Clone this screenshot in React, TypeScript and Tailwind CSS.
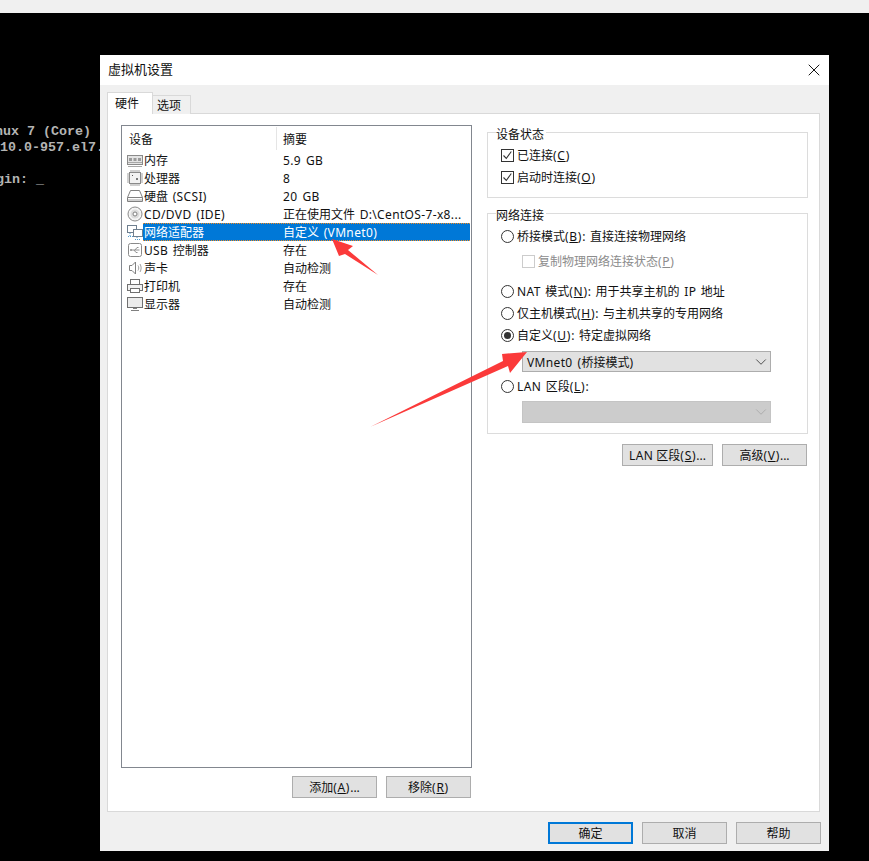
import type { ReactNode } from "react";
import { X, ChevronDown } from "lucide-react";

const MemoryIcon = () => (
  <svg width="16" height="16" viewBox="0 0 16 16" fill="none">
    <rect x="0.5" y="3.5" width="15" height="9" fill="#e4e4e4" stroke="#8a8a8a" />
    <rect x="2" y="6" width="3" height="3" fill="#9a9a9a" />
    <rect x="6.5" y="6" width="3" height="3" fill="#9a9a9a" />
    <rect x="11" y="6" width="3" height="3" fill="#9a9a9a" />
    <path d="M1 10.5h14M1 14.500h14" stroke="#a8a8a8" />
  </svg>
);

const CpuIcon = () => (
  <svg width="16" height="16" viewBox="0 0 16 16" fill="none">
    <rect x="2.5" y="2.5" width="11" height="11" fill="#f2f2f2" stroke="#8a8a8a" />
    <path
      d="M4 0v2M6 0v2M8 0v2M10 0v2M12 0v2M4 14v2M6 14v2M8 14v2M10 14v2M12 14v2M0 4h2M0 6h2M0 8h2M0 10h2M0 12h2M14 4h2M14 6h2M14 8h2M14 10h2M14 12h2"
      stroke="#a0a0a0"
    />
    <rect x="5" y="5" width="1" height="1" fill="#555" />
    <rect x="9" y="8" width="2" height="2" fill="#777" />
  </svg>
);

const DiskIcon = () => (
  <svg width="16" height="16" viewBox="0 0 16 16" fill="none">
    <path d="M3.5 2.5h9l3 7v4h-15v-4z" fill="#fff" stroke="#808080" />
    <path d="M0.5 9.5h15" stroke="#808080" />
    <path d="M1 11.5h14M1 12.5h14" stroke="#d0d0d0" />
  </svg>
);

const CdIcon = () => (
  <svg width="16" height="16" viewBox="0 0 16 16" fill="none">
    <circle cx="8" cy="8" r="7" fill="#f4f4f4" stroke="#8a8a8a" />
    <circle cx="8" cy="8" r="4.5" fill="#dcdcdc" />
    <circle cx="8" cy="8" r="2" fill="#fff" stroke="#808080" />
  </svg>
);

const NetworkIcon = () => (
  <svg width="16" height="16" viewBox="0 0 16 16" fill="none">
    <rect x="0.5" y="1.5" width="9" height="7" fill="#fff" stroke="#6f7f8f" />
    <rect x="6.5" y="5.5" width="9" height="7" fill="#fff" stroke="#6f7f8f" />
    <path d="M3 9v3M1 12.5h5M10 13v2M8 15.5h5" stroke="#4f9bd0" strokeDasharray="1 1" />
  </svg>
);

const UsbIcon = () => (
  <svg width="16" height="16" viewBox="0 0 16 16" fill="none">
    <rect x="1.5" y="1.5" width="13" height="13" rx="2" fill="#fff" stroke="#8a8a8a" />
    <path d="M3.5 8h9M8 8l2-2.5h1.5M7 8l2 2.5h1.5" stroke="#909090" />
    <circle cx="4" cy="8" r="1" fill="#909090" />
  </svg>
);

const SpeakerIcon = () => (
  <svg width="16" height="16" viewBox="0 0 16 16" fill="none">
    <path d="M2.5 5.5h2.5l3.5-3.5v12l-3.5-3.5h-2.5z" fill="#fff" stroke="#808080" />
    <path d="M11 5.5c1 1.500 1 3.500 0 5M13 4c1.500 2.500 1.500 5.500 0 8" stroke="#a0a0a0" />
  </svg>
);

const PrinterIcon = () => (
  <svg width="16" height="16" viewBox="0 0 16 16" fill="none">
    <rect x="3.5" y="1.500" width="9" height="5" fill="#fff" stroke="#707070" />
    <rect x="0.5" y="6.500" width="15" height="6" fill="#f2f2f2" stroke="#707070" />
    <rect x="3.500" y="10.500" width="9" height="4" fill="#fff" stroke="#707070" />
  </svg>
);

const MonitorIcon = () => (
  <svg width="16" height="16" viewBox="0 0 16 16" fill="none">
    <rect x="0.500" y="1.500" width="15" height="10" fill="#ececec" stroke="#707070" />
    <path d="M6 12.500h4M4 14.500h8" stroke="#808080" />
  </svg>
);

// latin runs are a touch wider in the picture than Noto Sans sets them
const L = ({ children }: { children: ReactNode }) => <span className="tracking-[0.35px]">{children}</span>;

// mnemonic like (C), parens sit wider than the default advance
const Mn = ({ k }: { k: string }) => (
  <span className="tracking-[0.7px]">
    (<u>{k}</u>)
  </span>
);

const devices = [
  { icon: <MemoryIcon />, name: "内存", summary: <L>5.9 GB</L> },
  { icon: <CpuIcon />, name: "处理器", summary: "8" },
  { icon: <DiskIcon />, name: <>硬盘 <L>(SCSI)</L></>, summary: <L>20 GB</L> },
  { icon: <CdIcon />, name: <L>CD/DVD (IDE)</L>, summary: <>正在使用文件 <L>D:\CentOS-7-x8...</L></> },
  { icon: <NetworkIcon />, name: "网络适配器", summary: <>自定义 <L>(VMnet0)</L></>, selected: true },
  { icon: <UsbIcon />, name: <><L>USB</L> 控制器</>, summary: "存在" },
  { icon: <SpeakerIcon />, name: "声卡", summary: "自动检测" },
  { icon: <PrinterIcon />, name: "打印机", summary: "存在" },
  { icon: <MonitorIcon />, name: "显示器", summary: "自动检测" },
];

const Btn = ({ children, primary, className }: { children: ReactNode; primary?: boolean; className?: string }) => (
  <button
    className={`h-[22px] flex items-center justify-center bg-[#e1e1e1] ${
      primary ? "border-2 border-[#0078d7]" : "border border-[#adadad]"
    } ${className ?? "w-[85px]"}`}
  >
    <span className="pt-[2px]">{children}</span>
  </button>
);

const Check = ({ label, disabled }: { label: ReactNode; disabled?: boolean }) => (
  <div className={`h-[18px] flex items-center gap-[3px] ${disabled ? "text-[#8c8c8c]" : ""}`}>
    <span
      className={`w-[13px] h-[13px] border flex items-center justify-center bg-white ${
        disabled ? "border-[#cccccc]" : "border-[#333333]"
      }`}
    >
      {!disabled && (
        <svg width="11" height="11" viewBox="0 0 11 11" fill="none">
          <path d="M1.500 5.500l2.800 3 5-7" stroke="#333" strokeWidth="1.100" />
        </svg>
      )}
    </span>
    <span className="pt-[2px]">{label}</span>
  </div>
);

const Radio = ({ label, checked }: { label: ReactNode; checked?: boolean }) => (
  <div className="h-[18px] flex items-center gap-[3px]">
    <span className="w-[13px] h-[13px] rounded-full border border-[#333333] bg-white flex items-center justify-center">
      {checked && <span className="w-[7px] h-[7px] rounded-full bg-[#333333]" />}
    </span>
    <span className="pt-[2px]">{label}</span>
  </div>
);

const Group = ({ title, className, children }: { title: string; className: string; children: ReactNode }) => (
  <div className={`relative border border-[#dcdcdc] ${className}`}>
    <span className="absolute -top-[7px] left-[8px] bg-white pr-[2px] leading-[18px]">{title}</span>
    {children}
  </div>
);

export default function App() {
  return (
    <div
      className="relative w-[869px] h-[861px] bg-black overflow-hidden text-[12px] leading-[18px] text-[#111111] [word-spacing:1.5px]"
      style={{ fontFamily: '"Noto Sans", "Noto Sans CJK SC", sans-serif' }}
    >
      <div className="h-[13px] bg-[#f0f0f0]" />

      {/* console behind the dialog */}
      <div className="absolute left-0 top-[124px] whitespace-pre font-['Liberation_Mono',monospace] font-bold text-[13.33px] leading-[16px] text-[#b4b4b4] [word-spacing:0px]">
        <div className="h-[16px] -ml-[5px]">nux 7 (Core)</div>
        <div className="h-[16px]">10.0-957.el7.</div>
        <div className="h-[16px]" />
        <div className="h-[16px] -ml-[4px]">gin: _</div>
      </div>

      <div className="relative ml-[100px] mt-[42px] w-[729px] h-[796px] bg-[#f0f0f0] flex flex-col">
        {/* title bar */}
        <div className="h-[30px] bg-white flex items-center justify-between pl-[8px] pr-[5px] shrink-0">
          <span className="text-[13px] pb-[2px]">虚拟机设置</span>
          <X size={20} strokeWidth={1.1} className="text-black" />
        </div>

        {/* tabs */}
        <div className="flex items-end h-[22px] mt-[7px] ml-[7px] -mb-px shrink-0 relative z-10">
          <div className="w-[46px] h-[22px] bg-white border border-b-0 border-[#d9d9d9] flex items-center pl-[7px]">
            硬件
          </div>
          <div className="w-[38px] h-[19px] bg-[#f0f0f0] border border-l-0 border-b-0 border-[#d9d9d9] flex items-center pl-[4px] pt-px">
            选项
          </div>
        </div>

        {/* panel */}
        <div className="ml-[7px] w-[713px] h-[699px] border border-[#d9d9d9] bg-white flex pl-[13px] pt-[11px] gap-[15px] shrink-0">
          <div className="w-[351px] flex flex-col">
            <div className="h-[643px] border border-[#82878f]">
              <div className="h-[25px] flex items-center">
                <span className="w-[154px] pl-[7px] pt-[3px]">设备</span>
                <span className="w-px h-[23px] bg-[#e5e5e5]" />
                <span className="pl-[6px] pt-[3px]">摘要</span>
              </div>
              {devices.map((d, i) => (
                <div key={i} className="h-[18px] flex items-center pl-[5px] pr-px">
                  <span className="w-[16px] h-[16px] shrink-0">{d.icon}</span>
                  <div
                    className={`flex-1 h-[18px] flex items-center ${
                      d.selected
                        ? "bg-[#0078d7] text-white border-y border-dotted border-[#f58b1f]"
                        : ""
                    }`}
                  >
                    <span className="w-[140px] pl-px pt-[2px] shrink-0">{d.name}</span>
                    <span className="pt-[2px]">{d.summary}</span>
                  </div>
                </div>
              ))}
            </div>
            <div className="flex justify-end gap-[9px] mt-[8px] pr-px">
              <Btn>添加<Mn k="A" />...</Btn>
              <Btn>移除<Mn k="R" /></Btn>
            </div>
          </div>

          <div className="w-[321px] mt-[7px]">
            <Group title="设备状态" className="h-[66px] pl-[13px] pt-[13px]">
              <Check label={<>已连接<Mn k="C" /></>} />
              <div className="mt-[4px]">
                <Check label={<>启动时连接<Mn k="O" /></>} />
              </div>
            </Group>

            <Group title="网络连接" className="h-[221px] mt-[15px] pl-[13px] pt-[13px]">
              <Radio label={<>桥接模式<Mn k="B" />: 直接连接物理网络</>} />
              <div className="mt-[7px] ml-[21px]">
                <Check disabled label={<>复制物理网络连接状态<Mn k="P" /></>} />
              </div>
              <div className="mt-[12px]">
                <Radio label={<><L>NAT</L> 模式<Mn k="N" />: 用于共享主机的 <L>IP</L> 地址</>} />
              </div>
              <div className="mt-[4px]">
                <Radio label={<>仅主机模式<Mn k="H" />: 与主机共享的专用网络</>} />
              </div>
              <div className="mt-[4px]">
                <Radio checked label={<>自定义<Mn k="U" />: 特定虚拟网络</>} />
              </div>
              <div className="mt-[7px] ml-[21px] w-[249px] h-[21px] bg-[#e1e1e1] border border-[#adadad] flex items-center justify-between pl-[4px] -mr-px">
                <span className="pt-[2px]"><L>VMnet0 (</L>桥接模式<L>)</L></span>
                <ChevronDown size={18} strokeWidth={1.1} className="text-[#333333]" />
              </div>
              <div className="mt-[5px]">
                <Radio label={<><L>LAN</L> 区段<Mn k="L" />:</>} />
              </div>
              <div className="mt-[6px] ml-[21px] w-[249px] h-[22px] bg-[#cccccc] border border-[#c4c4c4] flex items-center justify-end">
                <ChevronDown size={18} strokeWidth={1.1} className="text-[#a6a6a6]" />
              </div>
            </Group>

            <div className="flex justify-end gap-[9px] mt-[10px] pr-px">
              <Btn className="w-[91px]"><L>LAN</L> 区段<Mn k="S" />...</Btn>
              <Btn>高级<Mn k="V" />...</Btn>
            </div>
          </div>
        </div>

        {/* footer */}
        <div className="flex justify-end gap-[9px] mt-[10px] pr-[8px]">
          <Btn primary>确定</Btn>
          <Btn>取消</Btn>
          <Btn>帮助</Btn>
        </div>
      </div>

      {/* red annotation arrows drawn over the screenshot */}
      <svg className="absolute left-0 top-0 pointer-events-none" width="869" height="861" viewBox="0 0 869 861">
        <polygon points="332,239 353,246 348,250 378,275 345,254 339,256" fill="#fb3a3a" />
        <polygon points="370,427 503,361 502,354 527,352 510,373 508,366" fill="#fb3a3a" />
      </svg>
    </div>
  );
}
